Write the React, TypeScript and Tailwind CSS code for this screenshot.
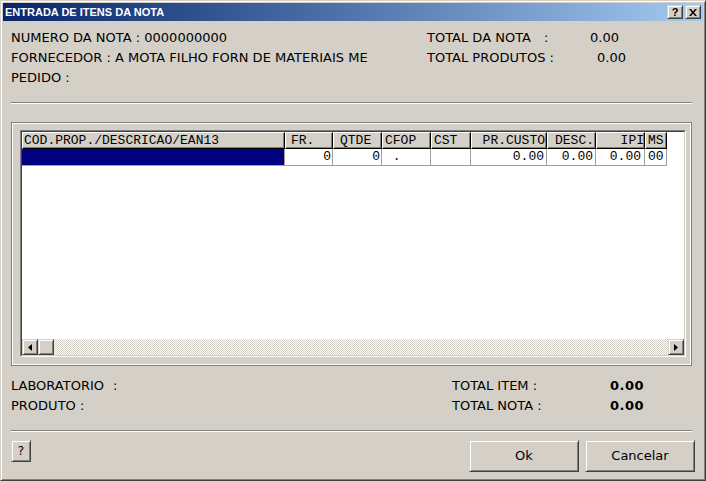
import React from "react";

const raised =
  "border border-t-[#d4d0c8] border-l-[#d4d0c8] border-r-[#404040] border-b-[#404040] shadow-[inset_1px_1px_0_#fff,inset_-1px_-1px_0_#808080] bg-[#d4d0c8]";

const headCell =
  "h-[17px] shrink-0 bg-[#d4d0c8] border-t border-l border-t-white border-l-white border-r border-b border-r-black border-b-black shadow-[inset_-1px_-1px_0_#808080] leading-[15px] whitespace-pre overflow-hidden";

const dataCell = "h-[17px] shrink-0 border-r border-b border-[#a0a0a0] leading-[16px] whitespace-pre overflow-hidden";

const columns = [
  { title: "COD.PROP./DESCRICAO/EAN13", w: "w-[263px]", head: "pl-[1px]", cell: "bg-[#000080]", value: "" },
  { title: "FR.", w: "w-[48px]", head: "pl-[5px]", cell: "text-right pr-[1px]", value: "0" },
  { title: "QTDE", w: "w-[49px]", head: "pl-[6px]", cell: "text-right pr-[1px]", value: "0" },
  { title: "CFOP", w: "w-[49px]", head: "pl-[2px]", cell: "pl-[3px]", value: " ." },
  { title: "CST", w: "w-[40px]", head: "pl-[2px]", cell: "", value: "" },
  { title: "PR.CUSTO", w: "w-[76px]", head: "text-right pr-[1px]", cell: "text-right pr-[2px]", value: "0.00" },
  { title: "DESC.", w: "w-[49px]", head: "text-right pr-[1px]", cell: "text-right pr-[2px]", value: "0.00" },
  { title: "IPI", w: "w-[49px]", head: "text-right", cell: "text-right pr-[3px]", value: "0.00" },
  { title: "MS", w: "w-[22px]", head: "pl-[2px]", cell: "pl-[3px]", value: "00" },
];

function Arrow({ dir }: { dir: "left" | "right" }) {
  return (
    <svg width="4" height="7" viewBox="0 0 4 7">
      {dir === "left" ? <path d="M4 0 L0 3.5 L4 7 Z" fill="#000" /> : <path d="M0 0 L4 3.5 L0 7 Z" fill="#000" />}
    </svg>
  );
}

export default function App() {
  return (
    <div className="w-[706px] h-[481px] bg-[#d4d0c8] font-['DejaVu_Sans',sans-serif] text-[13px] text-black">
      <div className="w-full h-full flex flex-col p-[2px] border border-t-[#d4d0c8] border-l-[#d4d0c8] border-r-[#404040] border-b-[#404040] shadow-[inset_1px_1px_0_#fff,inset_-1px_-1px_0_#808080]">
        {/* title bar */}
        <div className="h-[18px] shrink-0 flex items-center justify-between bg-linear-to-r from-[#0a246a] to-[#a6caf0] pl-[2px] pr-[2px]">
          <span className="font-['Liberation_Sans',sans-serif] font-bold text-[11px] text-white leading-none">
            ENTRADA DE ITENS DA NOTA
          </span>
          <div className="flex gap-[2px]">
            <div className={`w-[16px] h-[14px] flex items-center justify-center ${raised}`}>
              <span className="font-['Liberation_Sans',sans-serif] font-bold text-[11px] leading-none">?</span>
            </div>
            <div className={`w-[16px] h-[14px] flex items-center justify-center ${raised}`}>
              <svg width="8" height="7" viewBox="0 0 8 7">
                <path d="M0 0h2l2 2.5L6 0h2L5 3.5 8 7H6L4 4.5 2 7H0l3-3.5z" fill="#000" />
              </svg>
            </div>
          </div>
        </div>

        {/* body */}
        <div className="flex-1 flex flex-col pl-[8px] pr-[8px] pt-[7px]">
          <div className="flex leading-[20px]">
            <div className="w-[416px] flex flex-col">
              <div className="h-[20px] whitespace-pre">NUMERO DA NOTA : 0000000000</div>
              <div className="h-[20px] whitespace-pre">FORNECEDOR : A MOTA FILHO FORN DE MATERIAIS ME</div>
              <div className="h-[20px] whitespace-pre">PEDIDO :</div>
            </div>
            <div className="flex flex-col">
              <div className="h-[20px] flex whitespace-pre">
                <span className="w-[117px]">TOTAL DA NOTA</span>
                <span className="w-[46px]">:</span>
                <span>0.00</span>
              </div>
              <div className="h-[20px] flex whitespace-pre">
                <span className="w-[170px]">TOTAL PRODUTOS :</span>
                <span>0.00</span>
              </div>
            </div>
          </div>

          <div className="mt-[14px] w-[681px] h-[2px] border-t border-b border-t-[#808080] border-b-white" />

          {/* group box with grid */}
          <div className="mt-[18px] w-[681px] h-[244px] border border-[#808080] shadow-[inset_1px_1px_0_#fff,inset_-1px_-1px_0_#fff] pl-[8px] pt-[7px]">
            <div className="w-[666px] h-[227px] border border-t-[#808080] border-l-[#808080] border-r-white border-b-white">
              <div className="w-full h-full border border-t-[#404040] border-l-[#404040] border-r-[#d4d0c8] border-b-[#d4d0c8] bg-white flex flex-col font-['Liberation_Mono',monospace] text-[13px]">
                <div className="flex">
                  {columns.map((c) => (
                    <div key={c.title} className={`${headCell} ${c.w} ${c.head}`}>
                      {c.title}
                    </div>
                  ))}
                </div>
                <div className="flex">
                  {columns.map((c) => (
                    <div key={c.title} className={`${dataCell} ${c.w} ${c.cell}`}>
                      {c.value}
                    </div>
                  ))}
                </div>
                <div className="flex-1" />
                <div className="h-[16px] flex">
                  <div className={`w-[16px] h-[16px] flex items-center justify-center ${raised}`}>
                    <Arrow dir="left" />
                  </div>
                  <div className={`w-[16px] h-[16px] ${raised}`} />
                  <div className="flex-1 bg-[repeating-conic-gradient(#d4d0c8_0_25%,#ffffff_0_50%)] bg-[length:2px_2px]" />
                  <div className={`w-[16px] h-[16px] flex items-center justify-center ${raised}`}>
                    <Arrow dir="right" />
                  </div>
                </div>
              </div>
            </div>
          </div>

          {/* bottom info */}
          <div className="mt-[10px] flex leading-[20px]">
            <div className="w-[441px] flex flex-col">
              <div className="h-[20px] flex whitespace-pre">
                <span className="w-[102px]">LABORATORIO</span>
                <span>:</span>
              </div>
              <div className="h-[20px] whitespace-pre">PRODUTO :</div>
            </div>
            <div className="flex flex-col">
              <div className="h-[20px] flex whitespace-pre">
                <span className="w-[158px]">TOTAL ITEM :</span>
                <span className="font-bold tracking-[0.5px]">0.00</span>
              </div>
              <div className="h-[20px] flex whitespace-pre">
                <span className="w-[158px]">TOTAL NOTA :</span>
                <span className="font-bold tracking-[0.5px]">0.00</span>
              </div>
            </div>
          </div>

          <div className="mt-[14px] w-[681px] h-[2px] border-t border-b border-t-[#808080] border-b-white" />

          {/* buttons */}
          <div className="mt-[8px] flex items-start">
            <button className={`w-[20px] h-[22px] flex items-center justify-center text-[12px] ${raised}`}>?</button>
            <div className="ml-auto flex gap-[6px]">
              <button className={`w-[110px] h-[32px] flex items-center justify-center ${raised}`}>Ok</button>
              <button className={`w-[110px] h-[32px] flex items-center justify-center ${raised}`}>Cancelar</button>
            </div>
          </div>
        </div>
      </div>
    </div>
  );
}
